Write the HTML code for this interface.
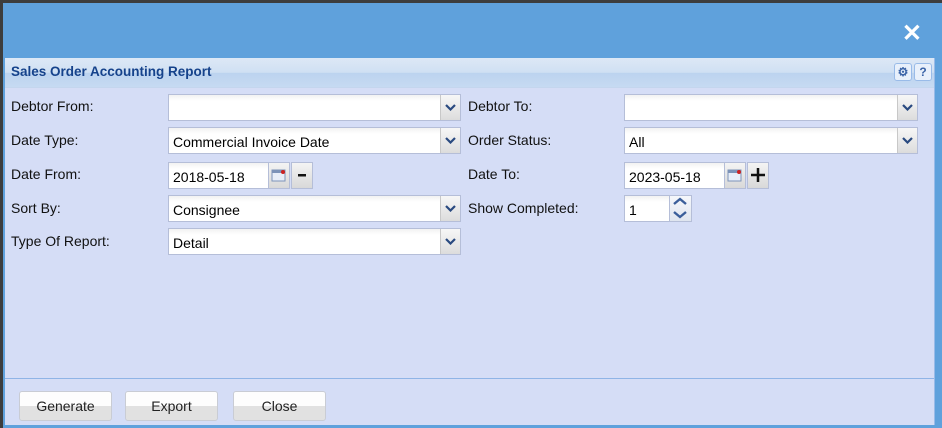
<!DOCTYPE html>
<html><head><style>
*{box-sizing:border-box;margin:0;padding:0}
body{width:942px;height:428px;background:#3d3d3d;font-family:"Liberation Sans",sans-serif;position:relative;overflow:hidden}
#win{position:absolute;left:3px;top:3px;width:939px;height:425px;background:#5fa1dc}
#x{position:absolute;right:20px;top:16px;color:#fff;font-size:24px;font-weight:bold}
#panel{position:absolute;left:2px;top:55px;width:930px;height:367px;background:#d5ddf6;border-right:1px solid #99bbe8}
#ph{height:30px;background:linear-gradient(#dde8f6,#cfe0f3 50%,#bcd3ef 52%,#c6daf2);border-bottom:1px solid #c4d6ee;font-weight:bold;font-size:13.5px;color:#15428b;padding:6px 0 0 6px}
.tb{position:absolute;top:5px;width:18px;height:18px;border:1px solid #99bbe8;border-radius:3px;background:#e8f0fb;font-size:12px;color:#3a63a7;text-align:center;line-height:16px;font-weight:bold}
.lbl{position:absolute;font-size:14px;color:#111}
.inp{position:absolute;height:27px;background:linear-gradient(#f2f2f2,#fff 6px);border:1px solid #b5bed8;font-size:14px;padding:6px 4px;color:#000}
.dd{position:absolute;right:0;top:0;width:20px;height:25px;background:linear-gradient(#f7f7f7,#dcdcdc);border-left:1px solid #c8c8c8}
.dd svg{position:absolute;left:4px;top:9px}
.sq{position:absolute;height:27px;width:22px;border:1px solid #b5bed8;background:linear-gradient(#f4f4f4,#d8d8d8)}
#foot{position:absolute;left:0;top:320px;width:929px;height:1px;background:#8fb4e6}
.btn{position:absolute;top:333px;width:93px;height:30px;border:1px solid #c9ccd4;border-radius:3px;background:linear-gradient(#fdfdfd 50%,#e1e1e1 50%);font-size:14px;color:#222;text-align:center;line-height:28px}
</style></head><body>
<div id="win"><div id="x">✕</div>
<div id="panel">
<div id="ph">Sales Order Accounting Report</div>
<div class="tb" style="left:889px">⚙</div><div class="tb" style="left:909px">?</div>

<div class="lbl" style="left:6px;top:40px">Debtor From:</div>
<div class="inp" style="left:163px;top:36px;width:293px"><div class="dd"><svg width="11" height="7"><path d="M1 1L5.5 5.5L10 1" stroke="#2a4a80" stroke-width="2.2" fill="none"/></svg></div></div>
<div class="lbl" style="left:463px;top:40px">Debtor To:</div>
<div class="inp" style="left:619px;top:36px;width:294px"><div class="dd"><svg width="11" height="7"><path d="M1 1L5.5 5.5L10 1" stroke="#2a4a80" stroke-width="2.2" fill="none"/></svg></div></div>

<div class="lbl" style="left:6px;top:74px">Date Type:</div>
<div class="inp" style="left:163px;top:69px;width:293px">Commercial Invoice Date<div class="dd"><svg width="11" height="7"><path d="M1 1L5.5 5.5L10 1" stroke="#2a4a80" stroke-width="2.2" fill="none"/></svg></div></div>
<div class="lbl" style="left:463px;top:74px">Order Status:</div>
<div class="inp" style="left:619px;top:69px;width:294px">All<div class="dd"><svg width="11" height="7"><path d="M1 1L5.5 5.5L10 1" stroke="#2a4a80" stroke-width="2.2" fill="none"/></svg></div></div>

<div class="lbl" style="left:6px;top:108px">Date From:</div>
<div class="inp" style="left:163px;top:104px;width:121px">2018-05-18</div>
<div class="sq" style="left:263px;top:104px"><svg width="20" height="25"><rect x="3" y="7" width="13" height="11" fill="#e8eef8" stroke="#7d93b8"/><rect x="3" y="7" width="13" height="3" fill="#7d93b8"/><circle cx="14" cy="9" r="2" fill="#c22"/></svg></div>
<div class="sq" style="left:286px;top:104px"><svg width="20" height="25"><rect x="6" y="11" width="8" height="2.5" fill="#111"/></svg></div>
<div class="lbl" style="left:463px;top:108px">Date To:</div>
<div class="inp" style="left:619px;top:104px;width:121px">2023-05-18</div>
<div class="sq" style="left:719px;top:104px"><svg width="20" height="25"><rect x="3" y="7" width="13" height="11" fill="#e8eef8" stroke="#7d93b8"/><rect x="3" y="7" width="13" height="3" fill="#7d93b8"/><circle cx="14" cy="9" r="2" fill="#c22"/></svg></div>
<div class="sq" style="left:742px;top:104px"><svg width="20" height="25"><path d="M10 5V19M3 12H17" stroke="#111" stroke-width="2.5"/></svg></div>

<div class="lbl" style="left:6px;top:142px">Sort By:</div>
<div class="inp" style="left:163px;top:137px;width:293px">Consignee<div class="dd"><svg width="11" height="7"><path d="M1 1L5.5 5.5L10 1" stroke="#2a4a80" stroke-width="2.2" fill="none"/></svg></div></div>
<div class="lbl" style="left:463px;top:142px">Show Completed:</div>
<div class="inp" style="left:619px;top:137px;width:47px">1</div>
<div class="sq" style="left:664px;top:137px;width:23px;background:linear-gradient(#f5f7fb,#dfe5ef)"><svg width="21" height="25"><path d="M4 8L10 3L16 8M4 16L10 21L16 16" stroke="#3a5e9a" stroke-width="2.4" fill="none"/></svg></div>

<div class="lbl" style="left:6px;top:175px">Type Of Report:</div>
<div class="inp" style="left:163px;top:170px;width:293px">Detail<div class="dd"><svg width="11" height="7"><path d="M1 1L5.5 5.5L10 1" stroke="#2a4a80" stroke-width="2.2" fill="none"/></svg></div></div>

<div id="foot"></div>
<div class="btn" style="left:14px">Generate</div>
<div class="btn" style="left:120px">Export</div>
<div class="btn" style="left:228px">Close</div>
</div></div>
</body></html>
